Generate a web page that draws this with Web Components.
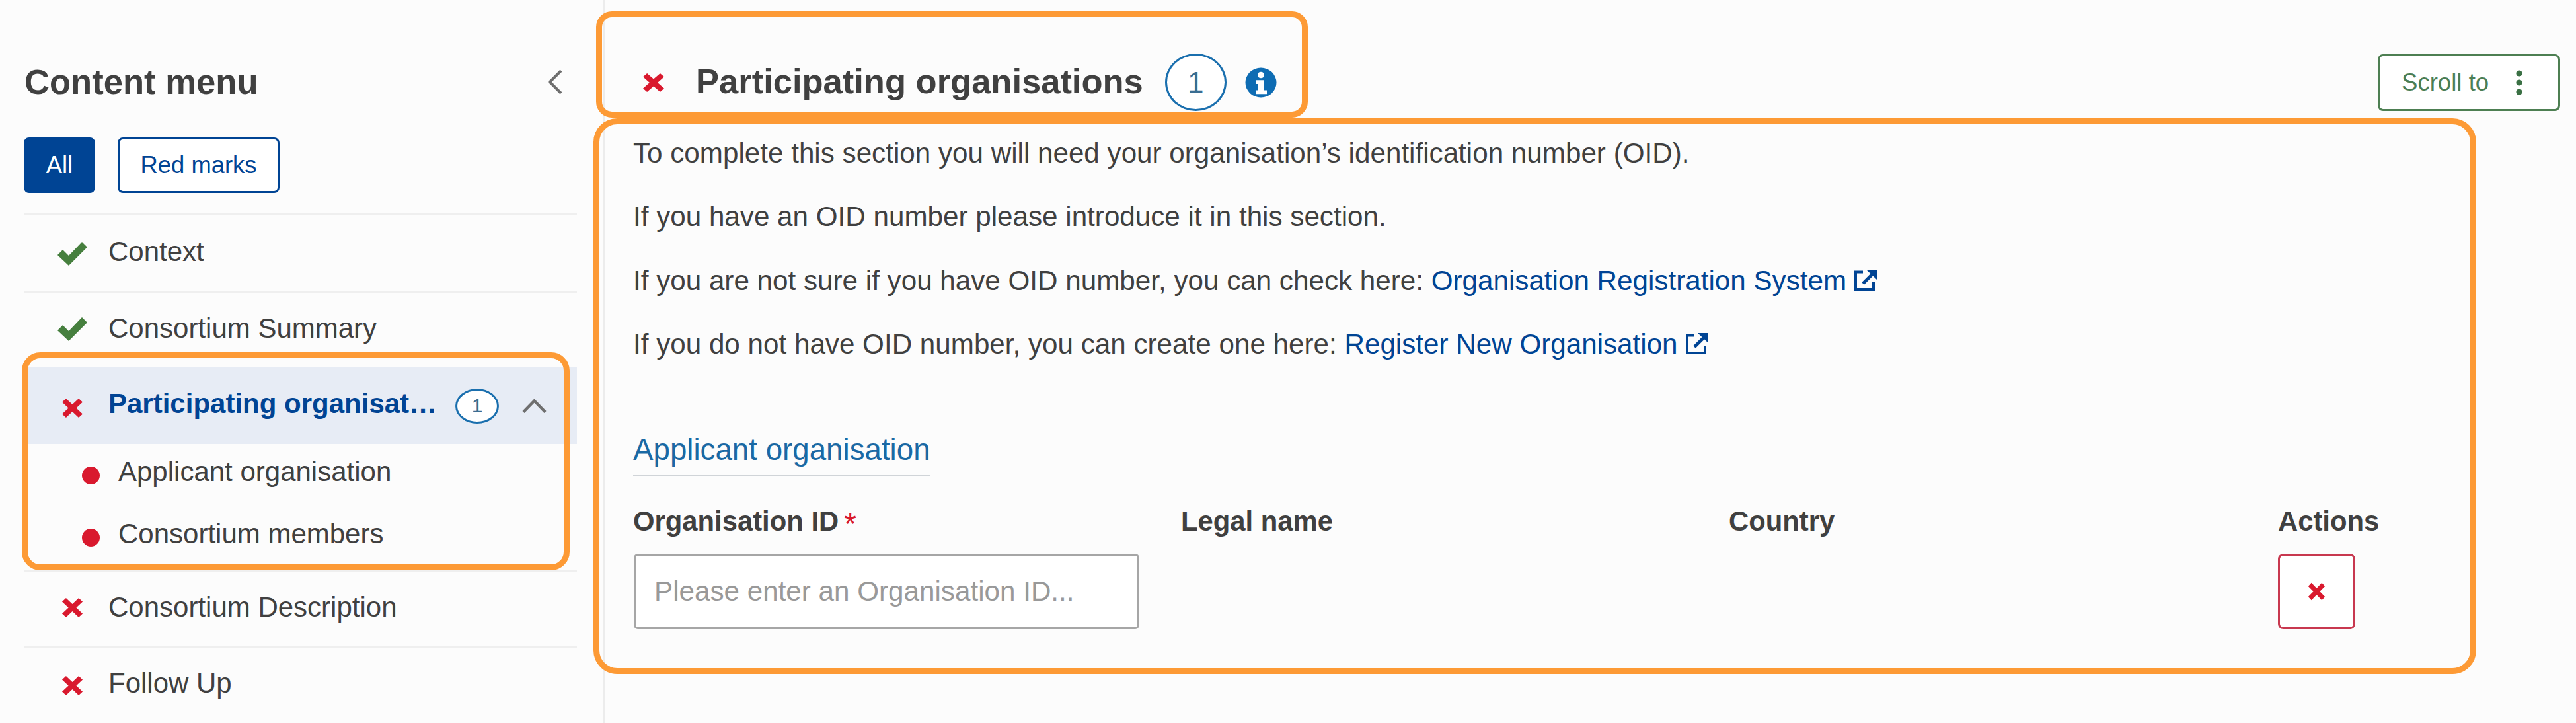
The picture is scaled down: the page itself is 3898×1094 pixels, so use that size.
<!DOCTYPE html>
<html lang="en">
<head>
<meta charset="utf-8">
<title>Participating organisations</title>
<style>
  html, body { margin: 0; height: 100%; }
  body {
    background: #fcfcfc;
    color: #404040;
    font: 42px/48px "Liberation Sans", Arial, sans-serif;
    overflow: hidden;
  }
</style>
</head>
<body>

<app-shell>
  <content-menu slot="aside">
    <span slot="title">Content menu</span>
    <menu-row status="done" style="--h:115px">Context</menu-row>
    <menu-row status="done" style="--h:112px;--dy:-4px">Consortium Summary</menu-row>
    <call-out style="--inset:-23px 11px 0 -3px;--radius:28px">
      <menu-row status="error" active count="1" style="--h:116px;--dy:6px" flat>Participating organisations</menu-row>
      <sub-item>Applicant organisation</sub-item>
      <sub-item>Consortium members</sub-item>
      <div style="height:3px"></div>
    </call-out>
    <menu-row status="error" style="--h:111.5px;--dy:-4px">Consortium Description</menu-row>
    <menu-row status="error" style="--h:113px">Follow Up</menu-row>
  </content-menu>

  <section-head>Participating organisations</section-head>

  <call-out style="--inset:-28.5px 127px -68px -60px;--radius:36px;margin-top:39.5px">
    <info-text>To complete this section you will need your organisation’s identification number (OID).</info-text>
    <info-text>If you have an OID number please introduce it in this section.</info-text>
    <info-text>If you are not sure if you have OID number, you can check here: <ext-link>Organisation Registration System</ext-link></info-text>
    <info-text>If you do not have OID number, you can create one here: <ext-link>Register New Organisation</ext-link></info-text>
    <sub-title>Applicant organisation</sub-title>
    <org-table></org-table>
  </call-out>
</app-shell>

<script>
const ICONS = {
  check: { box: "0 0 45 36", body: `<path d="M0 20 8 12l9 9L37 0l8 8-28 28z" fill="currentColor"/>` },
  cross: { box: "0 0 10 10", body: `<path d="M2.1.3 5 3.2 7.9.3l1.8 1.8L6.8 5l2.9 2.9-1.8 1.8L5 6.8 2.1 9.7.3 7.9 3.2 5 .3 2.1z" fill="currentColor"/>` },
  up: { box: "0 0 37 21", body: `<path d="M2 19.5 18.5 2.5 35 19.5" fill="none" stroke="currentColor" stroke-width="4.4"/>` },
  left: { box: "0 0 22 38", body: `<path d="M20 2 3 19l17 17" fill="none" stroke="currentColor" stroke-width="4.2"/>` },
  info: { box: "0 0 48 48", body: `<circle cx="24" cy="24" r="23.5" fill="currentColor"/><circle cx="24" cy="12" r="5" fill="#fff"/><path d="M17 20h12v16h4v6H16v-6h4V26h-3z" fill="#fff"/>` },
  external: { box: "0 0 34 32", body: `<path d="M13 3.5H2V30h27V19" fill="none" stroke="currentColor" stroke-width="4"/><path d="M13 21 27 7" fill="none" stroke="currentColor" stroke-width="5"/><path d="M18 0h16v15z" fill="currentColor"/>` },
  kebab: { box: "0 0 10 38", body: `<circle cx="5" cy="5" r="4.6" fill="currentColor"/><circle cx="5" cy="19" r="4.6" fill="currentColor"/><circle cx="5" cy="33" r="4.6" fill="currentColor"/>` },
};

// shorthand for the shadow root setup
class Base extends HTMLElement {
  constructor(html) {
    super();
    this.attachShadow({ mode: "open" });
    this.shadowRoot.innerHTML = html;
  }
}

class UiIcon extends HTMLElement {
  constructor() {
    super();
    this.attachShadow({ mode: "open" });
  }
  connectedCallback() {
    const icon = ICONS[this.getAttribute("name")];
    this.shadowRoot.innerHTML = `
      <style>
        :host { display: block; flex: none; width: var(--w); height: var(--h); }
        svg { display: block; width: 100%; height: 100%; }
      </style>
      <svg viewBox="${icon.box}" preserveAspectRatio="none">${icon.body}</svg>`;
  }
}

class CountBadge extends Base {
  constructor() {
    super(`
      <style>
        :host {
          display: flex; flex: none; align-items: center; justify-content: center;
          box-sizing: border-box;
          width: var(--w); height: var(--h);
          border: 3px solid #1a6fae; border-radius: 50%;
          background: #fff; color: #3a6d92;
          font-size: var(--size); line-height: 1;
        }
      </style>
      <slot></slot>`);
  }
}

class AppShell extends Base {
  constructor() {
    super(`
      <style>
        :host { display: grid; grid-template-columns: 915px 1fr; height: 1094px; }
        aside { box-sizing: border-box; border-right: 3px solid #ececec; }
        main { padding: 81px 24px 0 43px; min-width: 0; }
      </style>
      <aside><slot name="aside"></slot></aside>
      <main><slot></slot></main>`);
  }
}

class ContentMenu extends Base {
  constructor() {
    super(`
      <style>
        :host { display: block; padding: 94px 39px 0 36px; }
        header { display: flex; align-items: center; justify-content: space-between; height: 60px; }
        h2 { margin: 0 0 0 1px; font-size: 52.6px; line-height: 60px; font-weight: 700; }
        ui-icon { --w: 22px; --h: 38px; margin-right: 22px; color: #6f6f6f; }
        .filters { display: flex; gap: 34px; margin: 54px 0 31px; }
        button {
          box-sizing: border-box; height: 84px; padding: 0;
          border: 3px solid #004494; border-radius: 8px;
          font: 36.4px "Liberation Sans", Arial, sans-serif;
          background: #fff; color: #004494;
        }
        .all { width: 108px; background: #004494; color: #fff; }
        .red { width: 245px; }
      </style>
      <header><h2><slot name="title"></slot></h2><ui-icon name="left"></ui-icon></header>
      <div class="filters"><button class="all">All</button><button class="red">Red marks</button></div>
      <slot></slot>`);
  }
}

class MenuRow extends HTMLElement {
  constructor() {
    super();
    this.attachShadow({ mode: "open" });
  }
  connectedCallback() {
    const done = this.getAttribute("status") === "done";
    const active = this.hasAttribute("active");
    const icon = done
      ? `<ui-icon name="check" style="--w:45px;--h:36px;color:#467f3e"></ui-icon>`
      : `<ui-icon name="cross" style="--w:33px;--h:31px;color:#d9192e"></ui-icon>`;
    const right = active
      ? `<count-badge style="--w:66px;--h:53px;--size:30px">${this.getAttribute("count")}</count-badge>
         <ui-icon class="chev" name="up"></ui-icon>`
      : "";
    this.shadowRoot.innerHTML = `
      <style>
        :host { display: flex; align-items: center; height: var(--h); }
        :host(:not([flat])) { border-top: 3px solid #efefef; }
        :host([active]) { background: #e7ecf5; }
        .mark { display: flex; justify-content: center; flex: none; width: 67px; margin: var(--dy, 0) 0 0 40px; }
        .label {
          flex: 1; min-width: 0; margin-left: 21px; padding-bottom: 6px;
          white-space: nowrap; overflow: hidden; text-overflow: ellipsis;
        }
        :host([active]) .label { flex: none; width: 499px; font-weight: 700; color: #004494; }
        count-badge { margin-left: 26px; }
        .chev { --w: 37px; --h: 21px; margin-left: 35px; color: #6f6f6f; }
      </style>
      <div class="mark">${icon}</div>
      <div class="label"><slot></slot></div>
      ${right}`;
  }
}

class SubItem extends Base {
  constructor() {
    super(`
      <style>
        :host { display: flex; align-items: center; height: 94px; padding-left: 88px; }
        i { flex: none; width: 27px; height: 27px; border-radius: 50%; background: #d9192e; }
        span { margin-left: 28px; padding-bottom: 10px; }
      </style>
      <i></i><span><slot></slot></span>`);
  }
}

// content with the orange annotation ring laid over it
class CallOut extends Base {
  constructor() {
    super(`
      <style>
        :host { display: block; position: relative; }
        .ring {
          position: absolute; inset: var(--inset);
          border: 9.5px solid #fd9a35; border-radius: var(--radius);
          pointer-events: none;
        }
      </style>
      <slot></slot><div class="ring"></div>`);
  }
}

class SectionHead extends Base {
  constructor() {
    super(`
      <style>
        :host { display: flex; align-items: center; justify-content: space-between; height: 87px; }
        call-out { --inset: -64px -47px -10px -70px; --radius: 24px; display: flex; align-items: center; margin-left: 14px; }
        .wrap { display: flex; align-items: center; }
        h1 { margin: 0 33px 0 47px; font-size: 52.5px; line-height: 60px; font-weight: 700; padding-bottom: 4px; }
        .x { --w: 34px; --h: 30px; color: #d9192e; margin-top: 1px; }
        count-badge { --w: 93px; --h: 87px; --size: 44px; }
        .info { --w: 48px; --h: 46px; margin-left: 28px; color: #0e6cb3; }
        .scroll {
          box-sizing: border-box; display: flex; align-items: center;
          width: 276px; height: 86px; padding: 0 0 0 33px;
          border: 3px solid #4d7f52; border-radius: 8px;
          background: #fff; color: #4b7e55;
          font: 36.6px "Liberation Sans", Arial, sans-serif;
        }
        .kebab { --w: 10px; --h: 38px; margin-left: 41px; color: #3a7044; }
      </style>
      <call-out>
        <div class="wrap">
          <ui-icon class="x" name="cross"></ui-icon>
          <h1><slot></slot></h1>
          <count-badge>1</count-badge>
          <ui-icon class="info" name="info"></ui-icon>
        </div>
      </call-out>
      <button class="scroll">Scroll to<ui-icon class="kebab" name="kebab"></ui-icon></button>`);
  }
}

class InfoText extends Base {
  constructor() {
    super(`
      <style>
        :host { display: block; margin-bottom: 48.5px; white-space: nowrap; font-size: 42.2px; }
      </style>
      <slot></slot>`);
  }
}

class ExtLink extends Base {
  constructor() {
    super(`
      <style>
        :host { color: #004494; }
        ui-icon { --w: 34px; --h: 32px; display: inline-block; margin-left: 12px; vertical-align: -1px; }
      </style>
      <slot></slot><ui-icon name="external"></ui-icon>`);
  }
}

class SubTitle extends Base {
  constructor() {
    super(`
      <style>
        :host {
          display: block; width: fit-content;
          margin-top: 108px; padding-bottom: 9px;
          border-bottom: 3px solid #d0d4d8;
          color: #1a69a4; font-size: 45.7px; line-height: 56px;
        }
      </style>
      <slot></slot>`);
  }
}

class OrgTable extends Base {
  constructor() {
    super(`
      <style>
        :host {
          display: grid; grid-template-columns: 829px 829px 831px auto;
          row-gap: 25px; margin-top: 44px;
        }
        b { display: block; font-size: 41.8px; font-weight: 700; }
        sup { color: #d9192e; font-size: 48px; font-weight: 400; line-height: 0; vertical-align: -6px; margin-left: 8px; }
        input {
          box-sizing: border-box; width: 765px; height: 114px; margin-left: 1px; padding: 0 28px;
          border: 3px solid #a6a6a6; border-radius: 6px; background: #fff;
          font: 42.2px "Liberation Sans", Arial, sans-serif; outline: none;
        }
        input::placeholder { color: #999; opacity: 1; }
        button {
          display: flex; align-items: center; justify-content: center;
          box-sizing: border-box; width: 117px; height: 114px; padding: 0;
          border: 3px solid #c8384f; border-radius: 8px; background: #fff;
        }
        ui-icon { --w: 27px; --h: 28px; color: #d9192e; }
      </style>
      <b>Organisation ID<sup>*</sup></b><b>Legal name</b><b>Country</b><b>Actions</b>
      <input placeholder="Please enter an Organisation ID...">
      <span></span><span></span>
      <button><ui-icon name="cross"></ui-icon></button>`);
  }
}

customElements.define("ui-icon", UiIcon);
customElements.define("count-badge", CountBadge);
customElements.define("call-out", CallOut);
customElements.define("app-shell", AppShell);
customElements.define("content-menu", ContentMenu);
customElements.define("menu-row", MenuRow);
customElements.define("sub-item", SubItem);
customElements.define("section-head", SectionHead);
customElements.define("info-text", InfoText);
customElements.define("ext-link", ExtLink);
customElements.define("sub-title", SubTitle);
customElements.define("org-table", OrgTable);
</script>
</body>
</html>
